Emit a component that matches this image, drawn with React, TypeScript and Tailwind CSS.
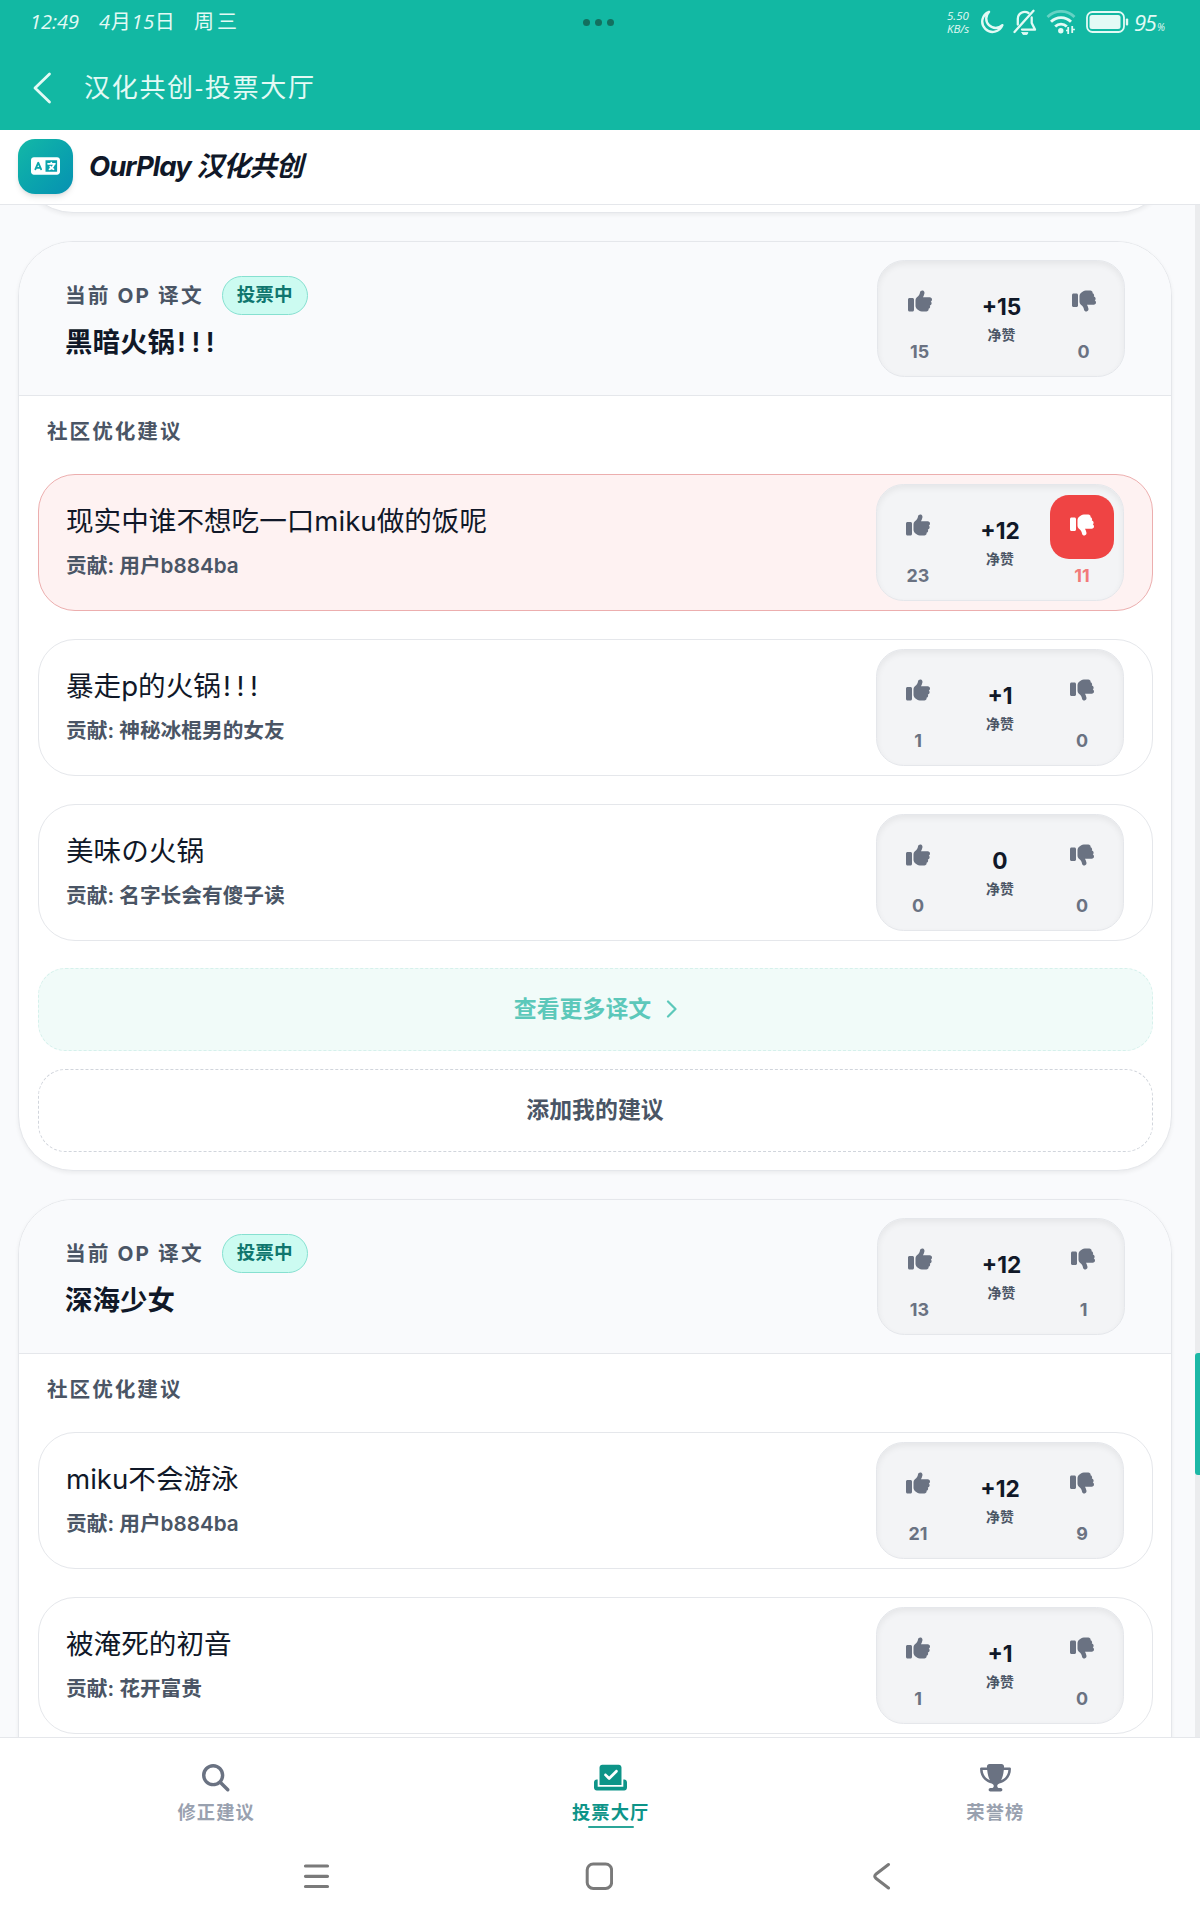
import clsx from "clsx";
import {
  FaCheckToSlot,
  FaLanguage,
  FaMagnifyingGlass,
  FaThumbsDown,
  FaThumbsUp,
  FaTrophy,
} from "react-icons/fa6";

interface Suggestion {
  text: string;
  marks?: string;
  author: string;
  up: number;
  down: number;
  votedDown?: boolean;
}

interface Entry {
  text: string;
  marks?: string;
  up: number;
  down: number;
  suggestions: Suggestion[];
  showActions?: boolean;
}

const entries: Entry[] = [
  {
    text: "黑暗火锅",
    marks: "!!!",
    up: 15,
    down: 0,
    showActions: true,
    suggestions: [
      { text: "现实中谁不想吃一口miku做的饭呢", author: "用户b884ba", up: 23, down: 11, votedDown: true },
      { text: "暴走p的火锅", marks: "!!!", author: "神秘冰棍男的女友", up: 1, down: 0 },
      { text: "美味の火锅", author: "名字长会有傻子读", up: 0, down: 0 },
    ],
  },
  {
    text: "深海少女",
    up: 13,
    down: 1,
    suggestions: [
      { text: "miku不会游泳", author: "用户b884ba", up: 21, down: 9 },
      { text: "被淹死的初音", author: "花开富贵", up: 1, down: 0 },
    ],
  },
];

function StatusBar() {
  return (
    <div className="flex h-[46px] items-center pr-[35px] pl-[30px] font-normal text-[#e3faf5]">
      <div className="flex flex-1 items-center pb-[2px] text-[20px]">
        <span className="w-[69px] text-[20px] italic">12:49</span>
        <span className="w-[95px] whitespace-nowrap tracking-[0.7px]">
          <i>4</i>月<i>15</i>日
        </span>
        <span className="tracking-[3px]">周三</span>
      </div>
      <div className="flex gap-[5px] pb-[1px]">
        <i className="size-[7px] rounded-full bg-[#13705f]" />
        <i className="size-[7px] rounded-full bg-[#13705f]" />
        <i className="size-[7px] rounded-full bg-[#13705f]" />
      </div>
      <div className="-mr-[1px] flex flex-1 items-center justify-end pb-[2px]">
        <div className="mr-[6px] w-[27px] text-[11.5px] leading-[13px] whitespace-nowrap italic">
          <div>5.50</div>
          <div>KB/s</div>
        </div>
        <svg className="mr-[9px] h-6 w-6" viewBox="0 0 24 24" fill="none" stroke="currentColor" strokeWidth="2.4" strokeLinejoin="round">
          <path d="M9 1.8A10.4 10.4 0 1 0 22.4 15.2A8.6 8.6 0 0 1 9 1.8Z" />
        </svg>
        <svg className="mr-[9px] h-[26px] w-6" viewBox="0 0 24 26" fill="none" stroke="currentColor" strokeWidth="2.3" strokeLinecap="round" strokeLinejoin="round">
          <path d="M4.8 15.5V10a7 7 0 0 1 10.8-6M18.7 8.5V14l3.3 6.6H9" />
          <path d="M1.5 23 20.5 1.8" />
          <path d="M9 23.5h6a3 2.3 0 0 1-6 0Z" fill="currentColor" strokeWidth="0.8" />
        </svg>
        <svg className="mr-[10px] h-6 w-[30px]" viewBox="0 0 30 24" fill="none" stroke="currentColor" strokeWidth="2.8">
          <path d="M1.5 7a19 19 0 0 1 27 0" opacity="0.4" />
          <path d="M5 11.8a14 14 0 0 1 20 0M9.2 16.5a8.2 8.2 0 0 1 11.6 0" />
          <circle cx="14.8" cy="20.7" r="2.7" fill="currentColor" stroke="none" />
          <path d="M22.2 17v7M26.2 16v7" strokeWidth="1.8" />
          <path d="M20 20.5h2M26.5 19.5h2.4" strokeWidth="1.4" />
        </svg>
        <svg className="mr-[5px] h-[22px] w-[43px]" viewBox="0 0 43 22">
          <rect x="1" y="1" width="37" height="20" rx="5.5" fill="none" stroke="currentColor" strokeWidth="1.8" />
          <rect x="3.5" y="4" width="31" height="14" rx="2.5" fill="currentColor" />
          <rect x="39.8" y="7.5" width="2.4" height="7" rx="1" fill="currentColor" />
        </svg>
        <span className="w-[23px] text-[22px] leading-[26px] tracking-[-1.3px] whitespace-nowrap italic">95</span>
        <span className="w-[9px] self-end text-[10px] leading-[16px] italic">%</span>
      </div>
    </div>
  );
}

function TitleBar() {
  return (
    <div className="flex h-[84px] items-center pb-[1px] pl-[33px] text-[#e3faf5]">
      <svg className="h-[32px] w-[19px]" viewBox="0 0 19 32" fill="none" stroke="currentColor" strokeWidth="2.8" strokeLinecap="round" strokeLinejoin="round">
        <path d="M16.5 2 2 16 16.5 30" />
      </svg>
      <h1 className="ml-[32px] text-[26px] font-normal tracking-[1.7px]">汉化共创-投票大厅</h1>
    </div>
  );
}

function Brand() {
  return (
    <header className="flex h-[75px] items-center border-b border-gray-200 bg-white pb-[2px] pl-[18px]">
      <div className="flex h-[55px] w-[55px] items-center justify-center rounded-[17px] bg-linear-to-br from-[#14b8a6] to-[#0891b2] text-white shadow-md">
        <FaLanguage size={29} className="h-[24px]" />
      </div>
      <span className="ml-[16px] pt-[1px] text-[27.5px] font-bold tracking-[-1px] text-gray-900 italic">
        OurPlay 汉化共创
      </span>
    </header>
  );
}

function VoteBox({ up, down, votedDown }: { up: number; down: number; votedDown?: boolean }) {
  const net = up - down;
  return (
    <div className="flex h-[117px] w-[248px] shrink-0 justify-between rounded-[27.5px] border border-gray-200 bg-gray-100 pt-[10px] pr-[8.5px] pl-[9.5px] shadow-[inset_0_3px_6px_rgba(0,0,0,0.06)]">
      <div className="flex w-16 flex-col items-center text-gray-500">
        <div className="flex h-16 items-center justify-center pb-[4px]">
          <FaThumbsUp size={24} />
        </div>
        <span className="mt-[5px] text-[17.9px] leading-6 font-bold">{up}</span>
      </div>
      <div className="flex flex-col items-center pt-[22px]">
        <span className="text-[22.7px] leading-[28px] font-bold text-gray-900">{net > 0 ? `+${net}` : net}</span>
        <span className="mt-[4px] text-[13.9px] leading-[20px] font-semibold text-gray-600">净赞</span>
      </div>
      <div className="flex w-16 flex-col items-center text-gray-500">
        <div
          className={clsx(
            "flex h-16 w-16 items-center justify-center rounded-[19px] pb-[4px]",
            votedDown && "bg-[#ef4444] text-white"
          )}
        >
          <FaThumbsDown size={24} />
        </div>
        <span className={clsx("mt-[5px] text-[17.9px] leading-6 font-bold", votedDown && "text-[#f27a7a]")}>
          {down}
        </span>
      </div>
    </div>
  );
}

function Phrase({ text, marks }: { text: string; marks?: string }) {
  return (
    <>
      {text}
      {marks && <span className="ml-[2px] tracking-[5.6px]">{marks}</span>}
    </>
  );
}

function SuggestionRow({ item }: { item: Suggestion }) {
  return (
    <div
      className={clsx(
        "flex h-[137px] items-center justify-between rounded-[37px] border pr-[28px] pl-[27.5px]",
        item.votedDown ? "border-[#ecaeae] bg-[#fef2f2]" : "border-gray-200 bg-white"
      )}
    >
      <div className="pb-[1px]">
        <div className="text-[27.6px] leading-[43px] text-gray-900">
          <Phrase text={item.text} marks={item.marks} />
        </div>
        <div className="mt-[4px] text-[20.7px] leading-[38px] font-semibold text-gray-600">贡献: {item.author}</div>
      </div>
      <VoteBox up={item.up} down={item.down} votedDown={item.votedDown} />
    </div>
  );
}

function CardActions() {
  return (
    <>
      <button className="mt-[27px] flex h-[83px] w-full items-center justify-center gap-[15px] rounded-[27.5px] border border-dashed border-[#d5f1ec] bg-[#f1fbf9] pb-[1px] pl-[2px] text-[22.9px] font-semibold text-[#5cc8ba]">
        查看更多译文
        <svg className="h-[18px] w-[12px]" viewBox="0 0 12 18" fill="none" stroke="currentColor" strokeWidth="2.2" strokeLinecap="round" strokeLinejoin="round">
          <path d="m2 1.5 7.5 7.5L2 16.5" />
        </svg>
      </button>
      <button className="mt-[18px] flex h-[83px] w-full items-center justify-center rounded-[27.5px] border border-dashed border-gray-300 bg-white pb-[1px] text-[22.9px] font-semibold text-gray-600">
        添加我的建议
      </button>
    </>
  );
}

function EntryCard({ entry }: { entry: Entry }) {
  return (
    <section className="shrink-0 overflow-hidden rounded-[55px] border border-gray-200 bg-white shadow-[0_2px_4px_rgba(0,0,0,0.06)]">
      <div className="flex h-[154px] items-start justify-between border-b border-gray-200 bg-[#f9fafc] pt-[18px] pr-[46px] pl-[46px]">
        <div className="pt-[16px]">
          <div className="flex h-[39px] items-center">
            <span className="pt-[1px] text-[20.7px] font-bold tracking-[2.1px] text-gray-600">当前 OP 译文</span>
            <span className="ml-[18px] flex h-[39px] items-center rounded-full border border-[#86e0d0] bg-[#ccfbf1] px-[14px] pb-[2px] text-[18.6px] font-semibold text-[#0f766e]">
              投票中
            </span>
          </div>
          <div className="mt-[5px] text-[27.5px] leading-[44px] font-semibold text-gray-900">
            <Phrase text={entry.text} marks={entry.marks} />
          </div>
        </div>
        <VoteBox up={entry.up} down={entry.down} />
      </div>
      <div className={clsx("px-[18.5px]", entry.showActions ? "pb-[18px]" : "pb-[80px]")}>
        <h3 className="h-[78px] pt-[19px] pl-[9.5px] text-[20.6px] leading-[34px] font-semibold tracking-[2px] text-gray-600">
          社区优化建议
        </h3>
        <div className="flex flex-col gap-[28px]">
          {entry.suggestions.map((item) => (
            <SuggestionRow key={item.text} item={item} />
          ))}
        </div>
        {entry.showActions && <CardActions />}
      </div>
    </section>
  );
}

function TabBar() {
  return (
    <nav className="flex h-[110px] justify-around border-t border-gray-200 bg-white pt-[26px] pr-[17px] pl-[19px] text-[18.3px] font-bold tracking-[1.1px] text-gray-400">
      <div className="flex flex-col items-center">
        <FaMagnifyingGlass className="text-gray-500" size={27.5} />
        <span className="mt-[6.5px] leading-[28px]">修正建议</span>
      </div>
      <div className="flex flex-col items-center text-[#0d9488]">
        <FaCheckToSlot size={29.3} className="-mt-[1px] -mb-[1px] h-[29.3px] w-[33px]" />
        <span className="mt-[7px] leading-[28px]">投票大厅</span>
        <span className="h-[2px] w-[46px] rounded-full bg-[#2ba598]" />
      </div>
      <div className="flex flex-col items-center">
        <FaTrophy className="h-[27.5px] w-[31px] text-gray-500" />
        <span className="mt-[6.5px] leading-[28px]">荣誉榜</span>
      </div>
    </nav>
  );
}

function SystemNav() {
  return (
    <div className="flex h-[73px] items-start bg-white pt-[14px] pl-[303px] text-[#7a7a7a]">
      <svg className="h-[30px] w-[28px]" viewBox="0 0 28 30" stroke="currentColor" strokeWidth="3.2" strokeLinecap="round">
        <path d="M2.5 5h22M2.5 15.3h22M2.5 25.5h22" />
      </svg>
      <svg className="ml-[254px] h-[30px] w-[28px]" viewBox="0 0 28 30" fill="none" stroke="currentColor" strokeWidth="3">
        <rect x="2.2" y="3" width="24.4" height="24.4" rx="6" />
      </svg>
      <svg className="ml-[259px] h-[30px] w-[20px]" viewBox="0 0 20 30" fill="none" stroke="currentColor" strokeWidth="3" strokeLinecap="round" strokeLinejoin="round">
        <path d="M16.5 3.5 3.8 13.2Q1.8 15.2 3.8 17.2L16.5 27" />
      </svg>
    </div>
  );
}

export default function App() {
  return (
    <div
      lang="zh-CN"
      className="flex h-[1920px] w-[1200px] flex-col overflow-hidden bg-white font-['Inter','Noto_Sans_CJK_SC',sans-serif]"
    >
      <div className="h-[130px] bg-[#12b8a3] font-['Open_Sans','Noto_Sans_CJK_SC',sans-serif]">
        <StatusBar />
        <TitleBar />
      </div>
      <Brand />
      <main className="flex h-[1532px] overflow-hidden bg-[#f9fafc]">
        <div className="flex flex-1 flex-col gap-[28px] pr-[23px] pl-[18px]">
          {/* tail of the card scrolled under the header */}
          <div className="-mt-[102px] h-[110px] shrink-0 rounded-[55px] border border-gray-200 bg-white shadow-[0_2px_4px_rgba(0,0,0,0.06)]" />
          {entries.map((entry) => (
            <EntryCard key={entry.text} entry={entry} />
          ))}
        </div>
        <div className="w-[5px] bg-[#ebecee] pt-[1148px]">
          <div className="h-[122px] rounded-l-[3px] bg-[#1db8a6]" />
        </div>
      </main>
      <TabBar />
      <SystemNav />
    </div>
  );
}
